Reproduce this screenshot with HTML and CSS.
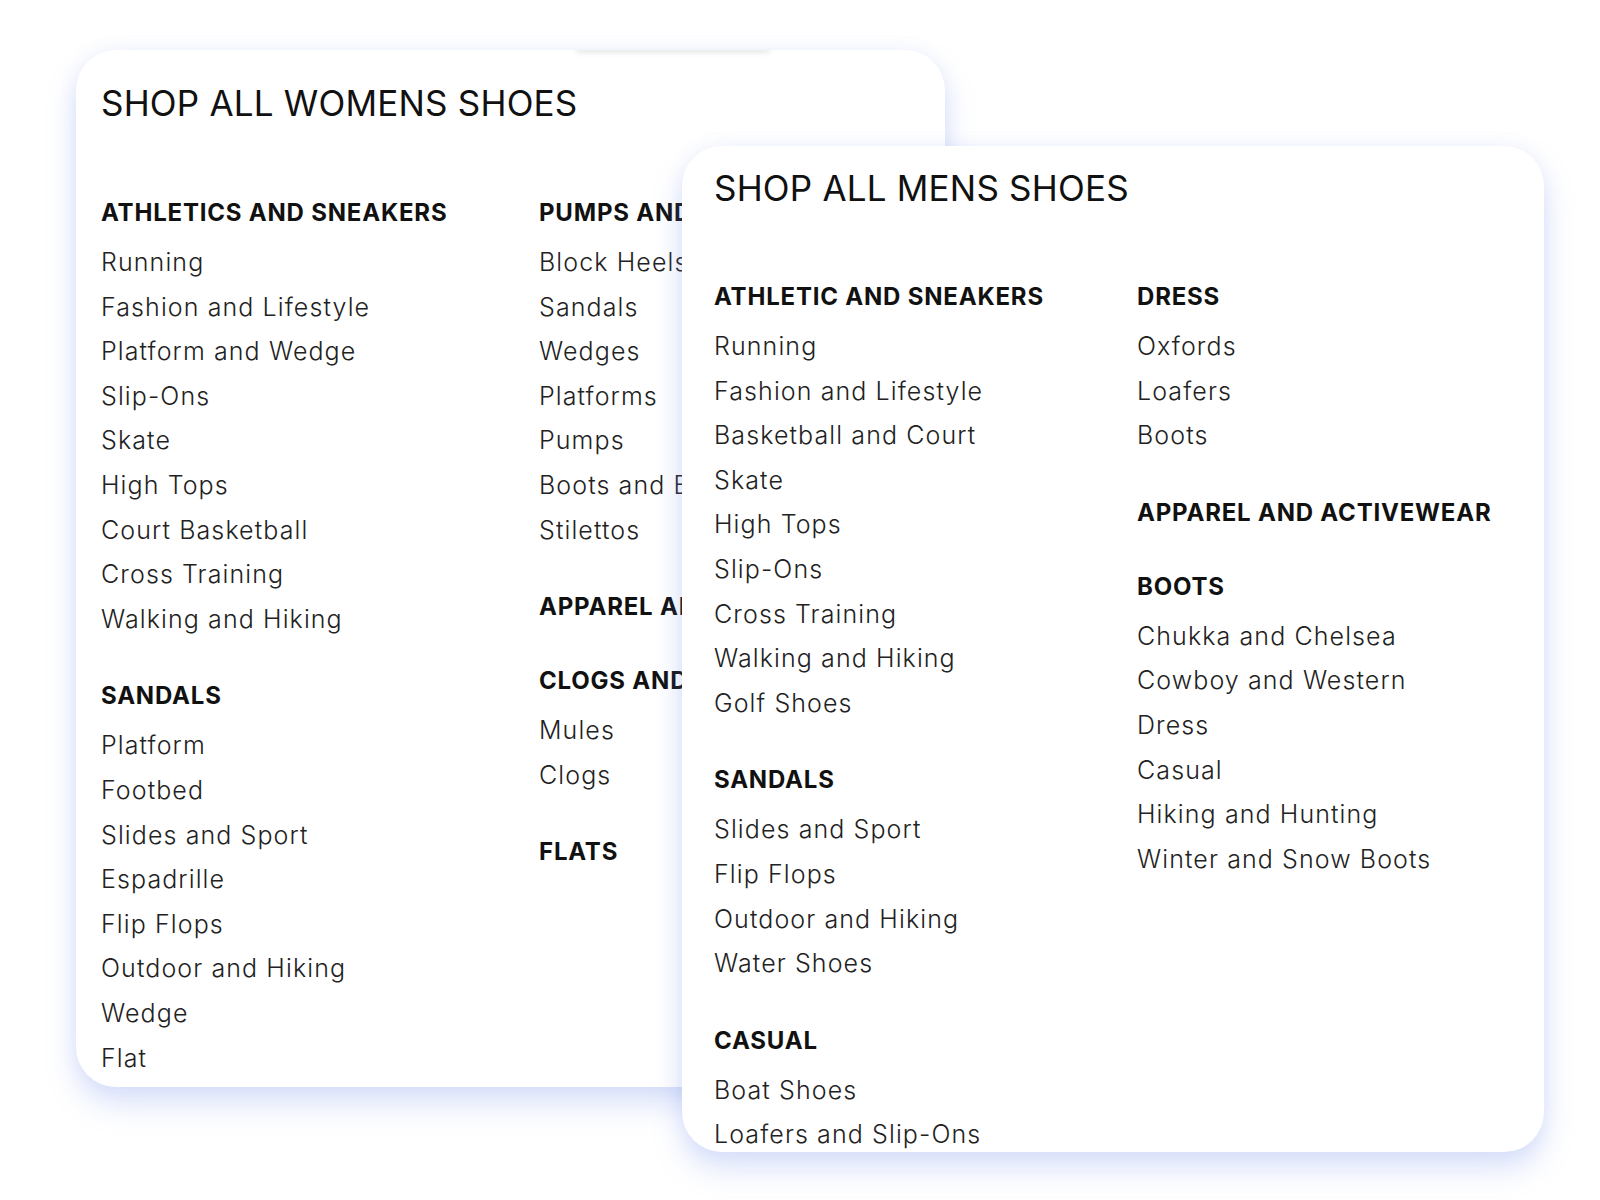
FILE: index.html
```html
<!DOCTYPE html>
<html lang="en">
<head>
  <meta charset="UTF-8">
  <title>Shop Shoes</title>
  <link rel="stylesheet" href="styles.css">
</head>
<body>
  <div class="stage">

    <!-- Womens menu -->
    <div class="menu-card womens">
      <h2 class="menu-title">SHOP ALL WOMENS SHOES</h2>
      <div class="menu-columns">
        <div class="menu-col">
          <div class="group">
            <h3 class="group-title">ATHLETICS AND SNEAKERS</h3>
            <ul class="group-links">
              <li><a href="#">Running</a></li>
              <li><a href="#">Fashion and Lifestyle</a></li>
              <li><a href="#">Platform and Wedge</a></li>
              <li><a href="#">Slip-Ons</a></li>
              <li><a href="#">Skate</a></li>
              <li><a href="#">High Tops</a></li>
              <li><a href="#">Court Basketball</a></li>
              <li><a href="#">Cross Training</a></li>
              <li><a href="#">Walking and Hiking</a></li>
            </ul>
          </div>
          <div class="group">
            <h3 class="group-title">SANDALS</h3>
            <ul class="group-links">
              <li><a href="#">Platform</a></li>
              <li><a href="#">Footbed</a></li>
              <li><a href="#">Slides and Sport</a></li>
              <li><a href="#">Espadrille</a></li>
              <li><a href="#">Flip Flops</a></li>
              <li><a href="#">Outdoor and Hiking</a></li>
              <li><a href="#">Wedge</a></li>
              <li><a href="#">Flat</a></li>
            </ul>
          </div>
        </div>
        <div class="menu-col">
          <div class="group">
            <h3 class="group-title">PUMPS AND HEELS</h3>
            <ul class="group-links">
              <li><a href="#">Block Heels</a></li>
              <li><a href="#">Sandals</a></li>
              <li><a href="#">Wedges</a></li>
              <li><a href="#">Platforms</a></li>
              <li><a href="#">Pumps</a></li>
              <li><a href="#">Boots and Booties</a></li>
              <li><a href="#">Stilettos</a></li>
            </ul>
          </div>
          <div class="group">
            <h3 class="group-title">APPAREL AND ACTIVEWEAR</h3>
          </div>
          <div class="group">
            <h3 class="group-title">CLOGS AND MULES</h3>
            <ul class="group-links">
              <li><a href="#">Mules</a></li>
              <li><a href="#">Clogs</a></li>
            </ul>
          </div>
          <div class="group">
            <h3 class="group-title">FLATS</h3>
          </div>
        </div>
      </div>
    </div>

    <!-- Mens menu, sits over the womens one -->
    <div class="menu-card mens">
      <h2 class="menu-title">SHOP ALL MENS SHOES</h2>
      <div class="menu-columns">
        <div class="menu-col">
          <div class="group">
            <h3 class="group-title">ATHLETIC AND SNEAKERS</h3>
            <ul class="group-links">
              <li><a href="#">Running</a></li>
              <li><a href="#">Fashion and Lifestyle</a></li>
              <li><a href="#">Basketball and Court</a></li>
              <li><a href="#">Skate</a></li>
              <li><a href="#">High Tops</a></li>
              <li><a href="#">Slip-Ons</a></li>
              <li><a href="#">Cross Training</a></li>
              <li><a href="#">Walking and Hiking</a></li>
              <li><a href="#">Golf Shoes</a></li>
            </ul>
          </div>
          <div class="group">
            <h3 class="group-title">SANDALS</h3>
            <ul class="group-links">
              <li><a href="#">Slides and Sport</a></li>
              <li><a href="#">Flip Flops</a></li>
              <li><a href="#">Outdoor and Hiking</a></li>
              <li><a href="#">Water Shoes</a></li>
            </ul>
          </div>
          <div class="group">
            <h3 class="group-title">CASUAL</h3>
            <ul class="group-links">
              <li><a href="#">Boat Shoes</a></li>
              <li><a href="#">Loafers and Slip-Ons</a></li>
            </ul>
          </div>
        </div>
        <div class="menu-col">
          <div class="group">
            <h3 class="group-title">DRESS</h3>
            <ul class="group-links">
              <li><a href="#">Oxfords</a></li>
              <li><a href="#">Loafers</a></li>
              <li><a href="#">Boots</a></li>
            </ul>
          </div>
          <div class="group">
            <h3 class="group-title">APPAREL AND ACTIVEWEAR</h3>
          </div>
          <div class="group">
            <h3 class="group-title">BOOTS</h3>
            <ul class="group-links">
              <li><a href="#">Chukka and Chelsea</a></li>
              <li><a href="#">Cowboy and Western</a></li>
              <li><a href="#">Dress</a></li>
              <li><a href="#">Casual</a></li>
              <li><a href="#">Hiking and Hunting</a></li>
              <li><a href="#">Winter and Snow Boots</a></li>
            </ul>
          </div>
        </div>
      </div>
    </div>

  </div>
</body>
</html>
```

FILE: styles.css
```css
body {
  margin: 0;
  background: #fff;
  font-family: Inter, "Open Sans", sans-serif;
  color: #111;
}
.stage {
  position: relative;
  width: 1600px;
  height: 1200px;
  overflow: hidden;
}
.menu-card {
  background: #fff;
  border-radius: 40px;
  overflow: hidden;
  box-sizing: border-box;
  box-shadow: 0 16px 30px rgba(120, 148, 238, 0.28), 0 0 18px rgba(120, 148, 238, 0.09);
}
.womens {
  position: relative;
  width: 869px;
  height: 1037px;
  margin: 50px 0 0 76px;
  padding: 33px 25px;
}
.womens .menu-title {
  margin-bottom: 75px;
}
/* faint tab shadow along the top edge */
.womens::before {
  content: "";
  position: absolute;
  top: -6px;
  left: 500px;
  width: 194px;
  height: 6px;
  border-radius: 3px;
  box-shadow: 0 2px 6px rgba(0, 0, 0, 0.12);
}
.mens {
  position: absolute;
  left: 682px;
  top: 146px;
  width: 862px;
  height: 1006px;
  padding: 22px 32px;
}
.menu-title {
  margin: 0 0 74px;
  font-size: 35px;
  line-height: 40px;
  font-weight: 400;
  letter-spacing: 0.2px;
  white-space: nowrap;
}
.menu-columns {
  display: grid;
  grid-template-columns: 438px 438px;
}
.mens .menu-columns {
  grid-template-columns: 423px 1fr;
}
.group {
  display: flow-root;
  margin-bottom: 40px;
}
.group-title {
  margin: 0 0 12px;
  font-size: 24px;
  line-height: 30px;
  font-weight: 700;
  letter-spacing: 0.8px;
  white-space: nowrap;
}
/* heading with no links under it */
.group-title:last-child {
  margin-bottom: 4px;
}
.group-links {
  list-style: none;
  margin: 0;
  padding: 0;
}
.group-links li {
  line-height: 44.6px;
  font-size: 25px;
  font-weight: 300;
  white-space: nowrap;
}
.group-links a {
  color: #222;
  text-decoration: none;
  letter-spacing: 1.1px;
}
```
